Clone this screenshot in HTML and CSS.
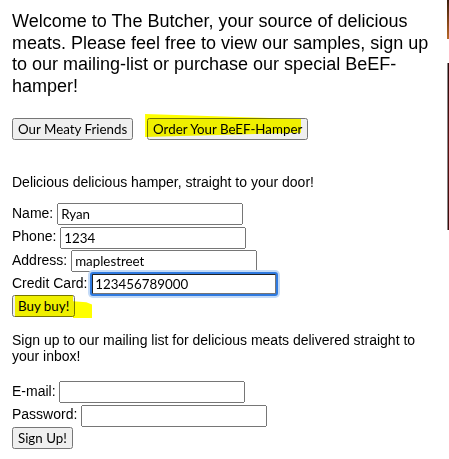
FILE: index.html
```html
<!DOCTYPE html>
<html>
<head>
<meta charset="utf-8">
<title>The Butcher</title>
<link rel="stylesheet" href="styles.css">
</head>
<body>
<div class="page">
  <main class="content">
    <p class="intro">Welcome to The Butcher, your source of delicious meats. Please feel free to view our samples, sign up to our mailing-list or purchase our special BeEF-hamper!</p>
    <div class="nav">
      <button class="btn-friends">Our Meaty Friends</button>
      <span class="hl-wrap"><button>Order Your BeEF-Hamper</button><span class="hl hl-order"></span></span>
    </div>
    <p class="lead">Delicious delicious hamper, straight to your door!</p>
    <form class="form">
      Name: <input type="text" value="Ryan"><br>
      Phone: <input type="text" value="1234"><br>
      Address: <input type="text" value="maplestreet"><br>
      Credit Card: <input type="text" class="focused" value="123456789000"><br>
      <span class="hl-wrap"><button type="button">Buy buy!</button><span class="hl hl-buy"></span><span class="hl hl-buy2"></span></span>
    </form>
    <p class="lead lead-signup">Sign up to our mailing list for delicious meats delivered straight to your inbox!</p>
    <form class="form">
      E-mail: <input type="text"><br>
      Password: <input type="password"><br>
      <button type="button">Sign Up!</button>
    </form>
  </main>
  <aside class="gallery">
    <div class="pic pic-a"></div>
    <div class="pic pic-b"></div>
  </aside>
</div>
</body>
</html>
```
FILE: styles.css
```css
html, body {
  margin: 0;
  padding: 0;
  overflow: hidden;
  background: #fff;
}
body {
  font-family: "Liberation Sans", Arial, sans-serif;
  font-size: 14px;
  color: #000;
}
.page {
  display: flex;
  align-items: flex-start;
  width: 449px;
  overflow: hidden;
}
.content {
  width: 447px;
  flex: none;
  padding: 0 7px 0 12px;
  box-sizing: border-box;
}
.intro {
  font-size: 18px;
  line-height: 21.5px;
  margin: 11px 0 21px;
}
.nav {
  margin: 0 0 34px;
}
.lead {
  margin: 0 0 12px;
}
.lead-signup {
  margin-bottom: 16px;
}
.form {
  margin: 0 0 14px;
  line-height: 23px;
}
button, input {
  font-family: Lato, "Liberation Sans", sans-serif;
  font-size: 13.333px;
}
button {
  padding: 1px 4px;
}
input {
  width: 186px;
  height: 22px;
  box-sizing: border-box;
  vertical-align: middle;
}
.btn-friends {
  margin-right: 10px;
}
.hl-wrap {
  position: relative;
  display: inline-block;
}
.hl {
  position: absolute;
  background: #ffff00;
  mix-blend-mode: multiply;
  pointer-events: none;
}
.hl-order {
  left: -2px;
  top: -4px;
  width: 156px;
  height: 23px;
  clip-path: polygon(0 0, 100% 22%, 100% 82%, 0 100%);
}
.hl-buy {
  left: 3px;
  top: 0;
  width: 58px;
  height: 22px;
}
.hl-buy2 {
  left: 61px;
  top: 6px;
  width: 19px;
  height: 17px;
  clip-path: polygon(0 0, 70% 6%, 100% 20%, 100% 100%, 0 100%);
}
.focused {
  outline: 2px solid #2f7ae0;
  outline-offset: -1px;
  box-shadow: 0 0 0 3px #c4dbf7;
  border-radius: 2px;
}
.gallery {
  flex: none;
  display: flex;
  flex-direction: column;
  gap: 24px;
}
.pic {
  width: 160px;
}
.pic-a {
  height: 39px;
  background: linear-gradient(180deg, #3a1d0c 0%, #8a4a1a 60%, #b86a2a 100%);
}
.pic-b {
  height: 167px;
  background: linear-gradient(180deg, #2a0808 0%, #5a1010 50%, #3a0a0a 100%);
  border-left: 1px solid #888;
}
```
